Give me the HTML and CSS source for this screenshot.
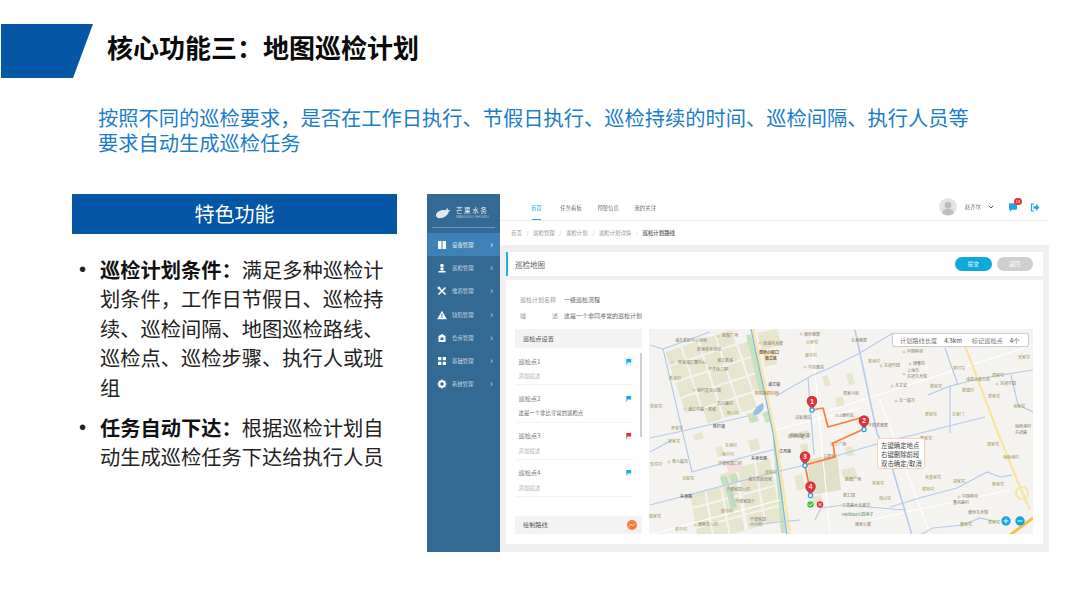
FILE: index.html
```html
<!DOCTYPE html>
<html lang="zh-CN">
<head>
<meta charset="utf-8">
<title>核心功能三&#xFF1A;地图巡检计划</title>
<link rel="stylesheet" href="styles.css">
</head>
<body>
<div class="slide">
  <header class="head">
    <div class="mark"></div>
    <h1 class="title">核心功能三<span class="p">&#xFF1A;</span>地图巡检计划</h1>
  </header>
  <p class="lead">按照不同的巡检要求<span class="p">&#xFF0C;</span>是否在工作日执行、节假日执行、巡检持续的时间、巡检间隔、执行人员等<br>要求自动生成巡检任务</p>
  <div class="main">
    <section class="features">
      <h2 class="banner">特色功能</h2>
      <ul class="bullets">
        <li><div><b>巡检计划条件<span class="p">&#xFF1A;</span></b>满足多种巡检计划条件<span class="p">&#xFF0C;</span>工作日节假日、巡检持续、巡检间隔、地图巡检路线、巡检点、巡检步骤、执行人或班组</div></li>
        <li><div><b>任务自动下达<span class="p">&#xFF1A;</span></b>根据巡检计划自动生成巡检任务下达给执行人员</div></li>
      </ul>
    </section>
    <section class="shot">
      <aside class="side">
        <div class="logo">
          <svg class="logo-fish" viewBox="0 0 18 14"><path d="M1 9C2 5 7 3.500 11 4L13.500 1.500 13.500 4 16.500 3.500 14.500 6C13.500 10 9 12.500 5 12.500 3 12.500 1 11.500 1 9Z" fill="#dfe8ef"/></svg>
          <div class="logo-text"><div class="logo-cn">芒果水务</div><div class="logo-en">MANGGUO SHUIWU</div></div>
        </div>
        <nav class="menu">
          <div class="mi on"><svg viewBox="0 0 10 10"><path d="M1 1h3.500v8H1zM5.500 1H9v8H5.500z" fill="#fff"/></svg><span>设备管理</span><i>›</i></div>
          <div class="mi"><svg viewBox="0 0 10 10"><circle cx="5" cy="2.500" r="1.800" fill="#fff"/><path d="M3.500 4.500h3v3h-3zM1.500 8h7v1.500h-7z" fill="#fff"/></svg><span>巡检管理</span><i>›</i></div>
          <div class="mi"><svg viewBox="0 0 10 10"><path d="M1.500 1.500l7 7M8.500 1.500l-7 7" stroke="#fff" stroke-width="1.600"/><circle cx="2" cy="2" r="1.400" fill="#fff"/></svg><span>维养管理</span><i>›</i></div>
          <div class="mi"><svg viewBox="0 0 10 10"><path d="M5 .8L9.800 9.200H.2Z" fill="#fff"/><path d="M4.500 3.500h1v3h-1zM4.500 7h1v1h-1z" fill="#336a94"/></svg><span>缺陷管理</span><i>›</i></div>
          <div class="mi"><svg viewBox="0 0 10 10"><path d="M1.500 3L5 1l3.500 2v6h-7Z" fill="#fff"/><path d="M3.500 4.500h3v2.500h-3z" fill="#336a94"/></svg><span>仓库管理</span><i>›</i></div>
          <div class="mi"><svg viewBox="0 0 10 10"><path d="M1 1h3.300v3.300H1zM5.700 1H9v3.300H5.700zM1 5.700h3.300V9H1zM5.700 5.700H9V9H5.700z" fill="#fff"/></svg><span>基础管理</span><i>›</i></div>
          <div class="mi"><svg viewBox="0 0 10 10"><circle cx="5" cy="5" r="2.800" fill="none" stroke="#fff" stroke-width="2"/><path d="M5 .5v1.500M5 8v1.500M.5 5H2M8 5h1.500M1.800 1.800l1 1M7.200 7.200l1 1M1.800 8.200l1-1M7.200 2.800l1-1" stroke="#fff" stroke-width="1.200"/></svg><span>系统管理</span><i>›</i></div>
        </nav>
      </aside>
      <div class="content">
        <div class="topbar">
          <div class="tabs"><span class="tab on">首页</span><span class="tab">任务看板</span><span class="tab">预警信息</span><span class="tab">我的关注</span></div>
          <div class="user">
            <svg class="avatar" viewBox="0 0 18 18"><circle cx="9" cy="9" r="9" fill="#e4e4e4"/><circle cx="9" cy="7" r="3.300" fill="#bdbdbd"/><path d="M3.500 15c0-3 2.500-4.500 5.500-4.500s5.500 1.500 5.500 4.500c-1.500 1.500-3.500 2-5.500 2s-4-.5-5.500-2Z" fill="#bdbdbd"/></svg>
            <span class="uname">赵齐尔</span>
            <svg class="chev" viewBox="0 0 6 4"><path d="M.7.700L3 3l2.300-2.300" fill="none" stroke="#555" stroke-width="1"/></svg>
            <span class="msg"><svg viewBox="0 0 10 9"><path d="M1 1.500C1 .7 1.600.3 2.300.3h5.400C8.500.3 9 .8 9 1.500v4C9 6.300 8.500 6.800 7.700 6.800H4L2 8.500V6.800C1.500 6.800 1 6.300 1 5.500Z" fill="#1ba8dc"/></svg><em class="badge">13</em></span>
            <svg class="logout" viewBox="0 0 10 9"><path d="M4 1H1.500v7H4" fill="none" stroke="#1ba8dc" stroke-width="1.200"/><path d="M3.500 3.200h2.500V1L9.500 4.500 6 8V5.800H3.500Z" fill="#1ba8dc"/></svg>
          </div>
        </div>
        <div class="crumb"><span>首页</span><u>/</u><span>巡检管理</span><u>/</u><span>巡检计划</span><u>/</u><span>巡检计划详情</span><u>/</u><b>巡检计划路线</b></div>
        <div class="body">
          <div class="card-head">
            <span class="card-title">巡检地图</span>
            <div class="btns"><span class="btn ok">提交</span><span class="btn back">返回</span></div>
          </div>
          <div class="card">
            <div class="info"><span class="k">巡检计划名称</span><span class="v">一级巡检流程</span></div>
            <div class="info"><span class="k split"><span>描</span><span>述</span></span><span class="v">这是一个非同寻常的巡检计划</span></div>
            <div class="panels">
              <div class="plist">
                <div class="phead">巡检点设置</div>
                <div class="pt"><div class="pt-name">巡检点1<svg class="flag boxed" viewBox="0 0 8 8"><path d="M1.500 1H7V5H2.500V7.500H1.500Z" fill="#1aa8dc"/></svg></div><div class="pt-desc">添加描述</div></div>
                <div class="pt"><div class="pt-name">巡检点2<svg class="flag" viewBox="0 0 8 8"><path d="M1.500 1H7V5H2.500V7.500H1.500Z" fill="#1aa8dc"/></svg></div><div class="pt-desc dark">这是一个非比寻常的巡检点</div></div>
                <div class="pt"><div class="pt-name">巡检点3<svg class="flag" viewBox="0 0 8 8"><path d="M1.500 1H7V5H2.500V7.500H1.500Z" fill="#e5303c"/></svg></div><div class="pt-desc">添加描述</div></div>
                <div class="pt"><div class="pt-name">巡检点4<svg class="flag" viewBox="0 0 8 8"><path d="M1.500 1H7V5H2.500V7.500H1.500Z" fill="#1aa8dc"/></svg></div><div class="pt-desc">添加描述</div></div>
                <div class="scroll"></div>
                <div class="phead foot">绘制路线<svg class="draw" viewBox="0 0 10 10"><circle cx="5" cy="5" r="5" fill="#fb7a3a"/><path d="M2 6.500L4 4l1.500 2L8 3.500" fill="none" stroke="#fff" stroke-width=".8"/></svg></div>
              </div>
              <div class="map">
                <svg class="map-svg" viewBox="649 329 384 205">
                  <rect x="649" y="329" width="384" height="205" fill="#f4f3ef"/>
                  <g fill="#e6e5cd" transform="matrix(1 -.33 .33 1 665 351)">
                    <rect x="0" y="1" width="15" height="13"/><rect x="17" y="1" width="15" height="13"/><rect x="34" y="1" width="15" height="13"/><rect x="51" y="1" width="15" height="13"/>
                    <rect x="0" y="16" width="15" height="14"/><rect x="17" y="16" width="15" height="14"/><rect x="34" y="16" width="15" height="14"/><rect x="51" y="16" width="15" height="14"/><rect x="68" y="16" width="14" height="14"/>
                    <rect x="0" y="32" width="15" height="14"/><rect x="17" y="32" width="15" height="14"/><rect x="34" y="32" width="15" height="14"/><rect x="51" y="32" width="15" height="14"/><rect x="68" y="32" width="14" height="14"/>
                    <rect x="0" y="48" width="15" height="14"/><rect x="17" y="48" width="15" height="14"/><rect x="34" y="48" width="15" height="14"/><rect x="51" y="48" width="15" height="14"/><rect x="68" y="48" width="14" height="14"/>
                    <rect x="17" y="64" width="15" height="14"/><rect x="34" y="64" width="15" height="14"/><rect x="51" y="64" width="15" height="14"/>
                  </g>
                  <g fill="#e6e5cd" transform="matrix(1 -.27 .17 1 690 493)">
                    <rect x="0" y="2" width="14" height="12"/><rect x="16" y="2" width="14" height="12"/><rect x="32" y="-10" width="14" height="24"/><rect x="50" y="-12" width="16" height="26"/><rect x="68" y="-12" width="14" height="26"/>
                    <rect x="0" y="16" width="14" height="18"/><rect x="16" y="16" width="14" height="18"/><rect x="32" y="16" width="14" height="18"/><rect x="50" y="16" width="16" height="18"/><rect x="68" y="16" width="14" height="18"/>
                    <rect x="0" y="36" width="14" height="14"/><rect x="16" y="36" width="14" height="14"/><rect x="32" y="36" width="14" height="14"/><rect x="50" y="36" width="16" height="14"/><rect x="68" y="36" width="14" height="14"/>
                  </g>
                  <path d="M730 462l7-2 3 11-7 2z M715 448l7-2 3 9-7 2z M693 435l9-3 2 6-9 3z M748 441l10-3 2 11-9 3z" fill="#e6e5cd"/>
                  <path d="M807 460l30-6 4 36-30 5z" fill="#e2e0c6"/>
                  <path d="M841 470l13-3 4 11-13 3z M845 448l7-2 2 9-7 2z M800 445l7-2 2 9-7 2zM794 476l8-2 3 15-8 2zM812 497l9-2 2 8-9 2zM763 354l12-4 2 14-12 3zM757 333l20-4 5 16-20 5zM822 377l5-2 4 10-6 2zM846 374l6-1 3 11-6 1zM800 432l8-2 2 8-8 2zM835 398l8-2 2 10-8 2z" fill="#e6e5cd"/>
                  <path d="M726 465l14-3 3 8-14 4z" fill="#f6dede"/>
                  <path d="M720 477l5-1 2 8-5 1zM729 475l7-2 3 8-7 2zM726 490l6-1 5 19-6 1z" fill="#c5e0b9"/>
                  <path d="M746 335l5-1 15 60-6 1zM773 442l5-1 8 92-5 0zM762 413l6-2 4 10-6 2zM747 414l9-2 3 9-9 2z" fill="#c8e2c0"/>
                  <g fill="none" stroke="#fff" stroke-width="1.100">
                    <path d="M775 430L860 408M800 420L1033 345M811 330L830 534M880 400L930 534M870 520L1010 490M652 534L780 500"/>
                  </g>
                  <g fill="none">
                    <path d="M965 346L998 433 1020 487" stroke="#f8e4a4" stroke-width="2.400"/>
                    <path d="M1020 487L1030 510" stroke="#f8e4a4" stroke-width="2.400"/>
                    <circle cx="1022" cy="493" r="6" stroke="#f8e4a4" stroke-width="2.200"/>
                    <path d="M1010 535L1033 518" stroke="#f5c04a" stroke-width="3"/>
                    <path d="M753 329L775 433 790 535" stroke="#f7e7a8" stroke-width="2.600"/>
                  </g>
                  <g fill="none" stroke="#b3cbec" stroke-width="1.200">
                    <path d="M650 345L663 349 710 332M663 349L692 472 745 457 776 449"/>
                    <path d="M751 329L773 433 787 535" stroke="#7db6e2"/>
                    <path d="M650 438L678 432 748 416M650 452L672 440"/>
                    <path d="M776 396L811 376 830 368 860 353 893 333"/>
                    <path d="M650 505L776 472 805 465 877 444 985 417"/>
                    <path d="M808 378L814 455M726 477L735 507"/>
                    <path d="M855 330L877 433 892 467 912 535" stroke-width="1.600"/>
                    <path d="M945 348L958 385M950 386L950 433M890 507L923 497 957 488 987 472 1000 477 1012 475"/>
                    <path d="M928 395L950 386 983 378 1033 370M1011 375L1018 405 1033 412"/>
                    <path d="M920 535L933 528 963 525 980 518 997 522M815 520L821 508 843 505 905 510M749 525L800 520"/>
                  </g>
                  <path d="M753 414q2-8 10-11 2 6-2 9-3 4-8 2z" fill="#9dbde8"/>
                  <g class="ml">
                    <text x="675" y="342">浦东新区中心河桥</text><text x="722" y="337">航度广场</text><text x="697" y="351">新港老年活动</text><text x="717" y="362">浦江新城</text><text x="678" y="364">陈家镇汇聚中心</text><text x="708" y="371">华洋佳二期</text><text x="697" y="392">保利星苑公馆</text><text x="688" y="411">浦江中路·新城</text><text x="717" y="405">高行路村</text><text x="763" y="345">南浦舟大楼</text><text x="804" y="336">康桥雅郡</text><text x="808" y="369">华苑雅苑</text><text x="851" y="342">东港雅郡</text><text x="884" y="367">东冠华园</text><text x="907" y="353">中国移动</text><text x="913" y="365">康馨苑</text><text x="907" y="372">上海市</text><text x="907" y="377.500">东冠艺术馆</text><text x="895" y="387">天主堂</text><text x="899" y="402">五一超市</text><text x="1000" y="385">东冠华园</text><text x="962" y="498">中国移动</text><text x="953" y="504">董凤路村</text><text x="968" y="514">康恒艺术馆</text><text x="845" y="481">凯德广场</text><text x="843" y="497">新汇园</text><text x="842" y="507">工善路水北盛坊</text><text x="855" y="526">康家公寓</text><text x="788" y="438">南港大厦</text><text x="718" y="465">华博家园二村</text><text x="726" y="491">华博家园八村</text><text x="735" y="503">华博家园十</text><text x="748" y="481">浦东新区张家</text><text x="698" y="526">康家苑八村</text><text x="750" y="521">华博家园</text><text x="750" y="526">十六村</text><text x="672" y="463">泉人超市</text><text x="795" y="419">汉庭酒店</text><text x="790" y="437">陈家苑大厦</text><text x="835" y="417">711便利店</text><text x="830" y="446">泽宁广场</text><text x="823" y="458">工善宅</text><text x="1015" y="434">东冠路</text><text x="1015" y="428">梅林港村</text><text x="843" y="395">周家小区</text><text x="868" y="427">华阳新雅郡</text>
                  </g>
                  <g class="mv">
                    <text x="650" y="408">青家宅</text><text x="669" y="380">新泾村</text><text x="727" y="415">陈六村</text><text x="671" y="430">齐家宅</text><text x="806" y="344">兴泰宅</text><text x="805" y="357">盛中村</text><text x="868" y="363">新港村</text><text x="930" y="388">新家宅</text><text x="925" y="416">新家宅</text><text x="952" y="416">东家门</text><text x="953" y="370">新村宅</text><text x="966" y="381">浦建大厦市政</text><text x="992" y="377">周家宅</text><text x="1018" y="359">吴家宅</text><text x="962" y="392">新建村</text><text x="988" y="398">新家宅</text><text x="1013" y="408">海家宅</text><text x="987" y="446">周家宅</text><text x="920" y="440">董家宅</text><text x="925" y="479">老基家宅</text><text x="953" y="483">胡家宅</text><text x="872" y="485">老家宅</text><text x="879" y="500">南山宅</text><text x="922" y="491">新陈村</text><text x="988" y="524">新家宅</text><text x="960" y="526">董家宅</text><text x="1003" y="459">梅林港村</text><text x="992" y="486">紫家宅</text><text x="668" y="443">宋家宅</text><text x="650" y="466">双宅村</text><text x="682" y="480">北家宅</text><text x="725" y="447">东港村</text><text x="722" y="456">海中村</text><text x="765" y="474">蔡家村</text><text x="721" y="513">新华村</text><text x="649" y="518">蔡家宅</text><text x="675" y="531">新华村</text>
                  </g>
                  <text class="mb" x="713" y="428">陈行镇</text>
                  <text class="mb" x="680" y="498">东港路</text>
                  <text class="mb" x="751" y="460">东港北路</text>
                  <text class="mr" x="759" y="354">康桥小区口</text>
                  <text class="mr" x="765" y="360">南工区</text>
                  <text class="mo" x="755" y="395">陈行路跨村桥</text>
                  <text class="mb" x="768" y="386">浦江镇</text>
                  <text class="mb" x="779" y="453">江月路</text>
                  <text class="mg" x="842" y="516">Parkbox公园港子</text>
                  <g fill="#e8c9b4">
                    <circle cx="718" cy="336" r="1.500"/><circle cx="672" cy="362" r="1.500"/><circle cx="760" cy="343" r="1.500"/><circle cx="694" cy="390" r="1.500"/><circle cx="685" cy="409" r="1.500"/><circle cx="801" cy="334" r="1.500"/><circle cx="805" cy="367" r="1.500"/><circle cx="881" cy="366" r="1.500"/><circle cx="904" cy="352" r="1.500"/><circle cx="910" cy="364" r="1.500"/><circle cx="904" cy="374" r="1.500"/><circle cx="892" cy="386" r="1.500"/><circle cx="896" cy="401" r="1.500"/><circle cx="997" cy="384" r="1.500"/><circle cx="669" cy="462" r="1.500"/><circle cx="959" cy="497" r="1.500"/><circle cx="695" cy="525" r="1.500"/>
                  </g>
                  <path d="M812 410L823 408 828 427 864 417 864 429 833 443 835 457 805 465 811 495" fill="none" stroke="#ff7a36" stroke-width="1.700" stroke-linejoin="round"/>
                  <g class="pin">
                    <path d="M812 409.500c-2-3-5.300-5-5.300-8.500a5.300 5.300 0 0 1 10.600 0c0 3.500-3.300 5.500-5.300 8.500z"/><text x="812" y="403.500">1</text>
                    <path d="M864 429c-2-3-5.300-5-5.300-8.500a5.300 5.300 0 0 1 10.600 0c0 3.500-3.300 5.500-5.300 8.500z"/><text x="864" y="423">2</text>
                    <path d="M805 465c-2-3-5.300-5-5.300-8.500a5.300 5.300 0 0 1 10.600 0c0 3.500-3.300 5.500-5.300 8.500z"/><text x="805" y="459">3</text>
                    <path d="M810.500 495c-2-3-5.300-5-5.300-8.500a5.300 5.300 0 0 1 10.600 0c0 3.500-3.300 5.500-5.300 8.500z"/><text x="810.500" y="489">4</text>
                  </g>
                  <g fill="#fff" stroke="#18a6dc" stroke-width="1.200">
                    <circle cx="812" cy="410" r="2.100"/><circle cx="864" cy="429.500" r="2.100"/><circle cx="805" cy="465.500" r="2.100"/><circle cx="810.500" cy="495.500" r="2.100"/>
                  </g>
                  <circle cx="810.500" cy="504.500" r="3.200" fill="#3fc43f"/>
                  <path d="M808.800 504.500l1.300 1.400 2.300-2.600" fill="none" stroke="#fff" stroke-width=".9"/>
                  <circle cx="820" cy="504.500" r="3.200" fill="#e5303c"/>
                  <path d="M818.700 503.200l2.600 2.600M821.300 503.200l-2.600 2.600" stroke="#fff" stroke-width=".9"/>
                  <circle cx="1006" cy="521" r="4.700" fill="#12a6dc"/>
                  <path d="M1003.500 521h5M1006 518.500v5" stroke="#fff" stroke-width="1"/>
                  <circle cx="1020" cy="521" r="4.700" fill="#12a6dc"/>
                  <path d="M1017.500 521h5" stroke="#fff" stroke-width="1"/>
                </svg>
                <div class="stat"><span>计划路线长度</span><b>4.3km</b><span class="s2">标记巡检点</span><b>4个</b></div>
                <div class="tip">左键确定地点<br>右键删除前段<br>双击确定/取消</div>
              </div>
            </div>
          </div>
        </div>
      </div>
    </section>
  </div>
</div>
</body>
</html>
```
FILE: styles.css
```css
* { box-sizing: border-box; }
html, body { margin: 0; padding: 0; background: #fff; }
body { font-family: "Noto Sans CJK SC", "Noto Sans", sans-serif; }
.slide { width: 1080px; height: 608px; overflow: hidden; background: #fff; padding-top: 24px; filter: blur(.3px); }
.p { font-family: "Noto Sans CJK TC", sans-serif; }

.head { display: flex; align-items: flex-start; height: 54px; }
.mark { width: 93px; height: 54px; background: #0556a5; clip-path: polygon(1px 0, 93px 0, 73px 100%, 1px 100%); }
.title { margin: 5px 0 0 14px; font-size: 26px; line-height: 36px; font-weight: 700; color: #0a0a0a; white-space: nowrap; }
.lead { margin: 26.500px 0 0 98px; font-size: 20.25px; line-height: 25px; color: #1b7dc9; white-space: nowrap; }

.main { display: flex; gap: 30px; margin: 39.500px 0 0 72px; }
.features { width: 325px; }
.banner { margin: 0; height: 40px; background: #0556a5; color: #fff; font-size: 20px; font-weight: 400; line-height: 40px; text-align: center; }
.bullets { list-style: none; margin: 21px 0 0; padding: 0; }
.bullets li { display: flex; font-size: 20.25px; line-height: 29.400px; color: #222; margin-bottom: 10.500px; }
.bullets li::before { content: "•"; box-sizing: border-box; flex: 0 0 28px; padding-left: 7px; font-family: "Liberation Sans", sans-serif; }
.bullets div { width: 285px; }
.bullets b { font-weight: 700; color: #111; }

.shot { display: flex; width: 622px; height: 358px; font-size: 5.400px; filter: blur(.25px); }
.side { width: 73px; background: #336a94; color: #dce6ee; }
.logo { display: flex; align-items: center; height: 34px; margin: 0 5px; padding: 4px 3px 0; border-bottom: 1px solid #6f97b5; }
.logo-fish { width: 17px; height: 14px; flex: none; }
.logo-text { margin-left: 4px; }
.logo-cn { font-size: 6.500px; line-height: 9px; letter-spacing: 1.600px; color: #eef3f7; }
.logo-en { font-size: 3.400px; line-height: 5px; font-family: "Liberation Sans", sans-serif; color: #a9c2d4; white-space: nowrap; }
.menu { margin-top: 5px; }
.mi { display: flex; align-items: center; height: 23.300px; padding: 0 7px 0 10px; color: #c6d6e2; }
.mi.on { background: #3e81b6; color: #e6eff5; }
.mi svg { width: 10px; height: 10px; flex: none; }
.mi span { margin-left: 5px; flex: 1; }
.mi i { font-style: normal; font-size: 9px; line-height: 8px; font-family: "Liberation Sans", sans-serif; }

.content { flex: 1; display: flex; flex-direction: column; min-width: 0; }
.topbar { display: flex; align-items: stretch; justify-content: space-between; height: 27px; border-bottom: 1px solid #eee; padding-left: 31px; background: #fff; }
.tabs { display: flex; gap: 15.500px; }
.tab { display: block; height: 26px; padding-top: 10px; line-height: 8px; color: #777; white-space: nowrap; }
.tab.on { color: #1ba8dc; position: relative; margin-right: 3px; }
.tab.on::after { content: ""; position: absolute; left: 1px; right: 1px; bottom: 0; height: 1.500px; background: #1bb2e2; }
.user { display: flex; align-items: center; padding-right: 9px; }
.avatar { width: 18px; height: 18px; }
.uname { margin-left: 8px; color: #777; }
.chev { width: 6px; height: 4px; margin-left: 7px; }
.msg { position: relative; display: block; width: 10px; height: 9px; margin-left: 14px; }
.msg svg { display: block; width: 10px; height: 9px; }
.badge { position: absolute; left: 6px; top: -4.500px; width: 8px; height: 7px; border-radius: 4px; background: #e5303c; color: #fff; font-style: normal; font-size: 4px; line-height: 7px; text-align: center; font-family: "Liberation Sans", sans-serif; }
.logout { width: 10px; height: 9px; margin-left: 12px; }

.crumb { display: flex; align-items: center; height: 24px; padding-left: 11px; background: #fff; color: #999; }
.crumb u { text-decoration: none; margin: 0 4.600px; color: #bbb; }
.crumb b { font-weight: 500; color: #555; }

.body { flex: 1; background: #f0f0f0; padding: 7px 6px 8px; display: flex; flex-direction: column; gap: 4px; }
.card-head { display: flex; align-items: center; justify-content: space-between; height: 24px; padding: 0 10px 0 7px; background: #fff; border-left: 2px solid #1cb3e3; }
.card-title { font-size: 7.500px; color: #666; }
.btns { display: flex; gap: 5px; }
.btn { width: 36.500px; height: 14px; border-radius: 7px; color: #fff; text-align: center; line-height: 14px; }
.btn.ok { background: #0fa8da; }
.btn.back { background: #cfcfcf; }

.card { flex: 1; background: #fff; padding: 11px 9.500px 10px 9px; }
.info { display: flex; height: 16px; align-items: center; padding-left: 5px; font-size: 6px; }
.k { width: 44px; color: #999; }
.split { display: flex; justify-content: space-between; width: 38px; margin-right: 6px; }
.v { color: #666; }
.panels { display: flex; gap: 7px; margin-top: 6px; height: 205px; }
.plist { position: relative; width: 127px; display: flex; flex-direction: column; }
.phead { display: flex; align-items: center; justify-content: space-between; height: 19px; padding: 0 5px 0 8px; background: #f3f3f3; font-size: 6.200px; color: #555; flex: none; }
.foot { margin-top: auto; height: 18.500px; }
.draw { width: 10px; height: 10px; }
.pt { width: 119px; height: 37.300px; padding-top: 5px; border-bottom: 1px solid #f3f3f3; flex: none; }
.pt-name { display: flex; align-items: center; justify-content: space-between; height: 16px; padding: 0 2px 0 3.500px; font-size: 6.200px; color: #777; }
.flag { width: 7px; height: 7px; }
.flag.boxed { background: #eaf6fb; outline: 1.500px solid #eaf6fb; }
.pt-desc { height: 14px; line-height: 14px; padding-left: 3.500px; color: #b5b5b5; }
.pt-desc.dark { color: #666; }
.scroll { position: absolute; left: 125px; top: 24px; width: 2px; height: 84px; background: #cfcfcf; }

.map { position: relative; width: 384px; height: 205px; overflow: hidden; }
.map-svg { display: block; width: 384px; height: 205px; }
.map-svg text { font-family: "Noto Sans CJK SC", sans-serif; font-size: 4px; }
.ml text { fill: #85795f; }
.mv text { fill: #9a9650; }
.mb { fill: #555; font-weight: 500; }
.mr { fill: #8e5a24; font-weight: 700; }
.mo { fill: #c9803c; font-weight: 500; }
.mg { fill: #4c8a54; }
.pin path { fill: #e3303d; }
.map-svg .pin text { fill: #fff; font-size: 6.500px; text-anchor: middle; font-family: "Liberation Sans", sans-serif; font-weight: 700; }
.stat { position: absolute; left: 243px; top: 4px; display: flex; align-items: center; width: 136.500px; height: 14px; padding-left: 7px; background: #fff; border: 1px solid #ccc; border-radius: 2px; font-size: 6.200px; color: #777; white-space: nowrap; }
.stat b { margin-left: 7px; font-weight: 400; color: #444; }
.stat .s2 { margin-left: 10px; }
.tip { position: absolute; left: 228px; top: 109px; width: 48px; height: 31px; padding: 2px 0 0 3px; background: #fff; border: 1px solid #f8cfb4; border-radius: 3px; font-size: 6.400px; line-height: 9px; color: #444; white-space: nowrap; }
```
